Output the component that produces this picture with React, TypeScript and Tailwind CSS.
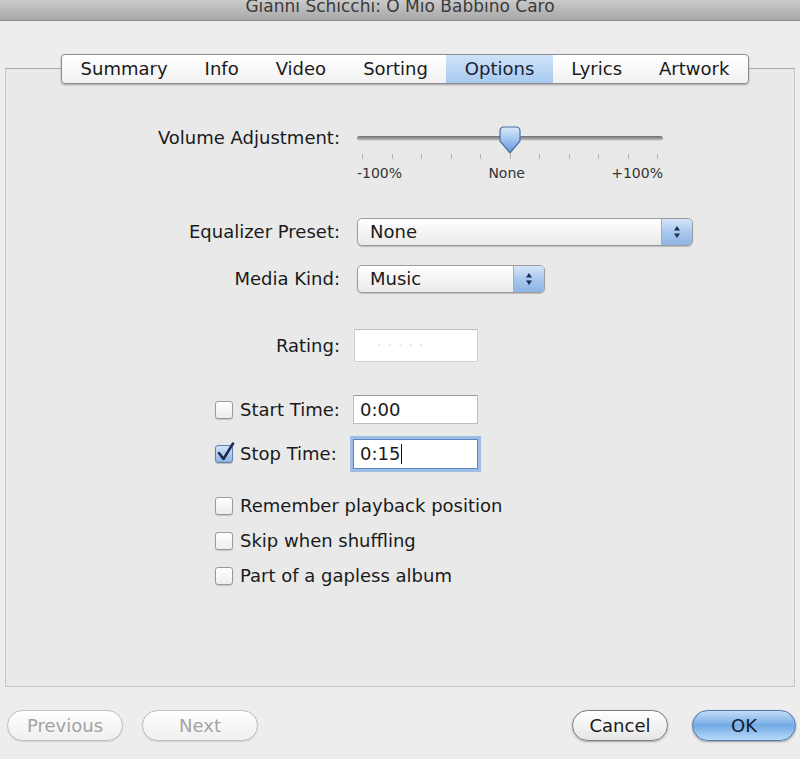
import React from "react";

function Checkbox({ checked = false }: { checked?: boolean }) {
  if (checked) {
    return (
      <div className="relative w-[18px] h-[18px] shrink-0 rounded-[3px] border border-[#5f80ad] bg-gradient-to-b from-[#d3e4f8] to-[#8fb4e2] shadow-[0_1px_1px_rgba(0,0,0,0.2)]">
        <svg className="absolute -top-[4px] left-[1px]" width="19" height="21" viewBox="0 0 19 21">
          <path d="M2 11 L6.5 17 L16 1.5" fill="none" stroke="#1b2c57" strokeWidth="2.6" strokeLinecap="round" strokeLinejoin="round" />
        </svg>
      </div>
    );
  }
  return (
    <div className="w-[18px] h-[18px] shrink-0 rounded-[3px] border border-[#9a9a9a] bg-gradient-to-b from-white to-[#ededed] shadow-[0_1px_1px_rgba(0,0,0,0.15)]" />
  );
}

function Select({ value, width }: { value: string; width: string }) {
  return (
    <div className={`relative h-[28px] ${width} rounded-[5px] border border-[#9c9c9c] bg-gradient-to-b from-white to-[#eaeaea] shadow-[0_1px_1px_rgba(0,0,0,0.2)] flex items-center`}>
      <span className="pl-[12px] text-[18px] leading-none text-[#1a1a1a]">{value}</span>
      <div className="absolute right-0 top-0 bottom-0 w-[31px] rounded-r-[4px] border-l border-[#94b0d6] bg-gradient-to-b from-[#d6e6f9] via-[#a9c8ee] to-[#8eb4e4] flex items-center justify-center">
        <svg width="10" height="16" viewBox="0 0 10 16">
          <path d="M5 2 L8 6.5 H2 Z" fill="#1e2d50" />
          <path d="M5 14 L8 9.5 H2 Z" fill="#1e2d50" />
        </svg>
      </div>
    </div>
  );
}

function Button({ label, width, kind }: { label: string; width: string; kind: "disabled" | "normal" | "default" }) {
  const base = `h-[31px] ${width} rounded-full flex items-center justify-center text-[18px] leading-none`;
  if (kind === "disabled") {
    return (
      <div className={`${base} border border-[#bdbdbd] bg-gradient-to-b from-white to-[#efefef] text-[#a3a3a3] shadow-[0_1px_1px_rgba(0,0,0,0.12)]`}>
        {label}
      </div>
    );
  }
  if (kind === "default") {
    return (
      <div className={`${base} border border-[#4e78ad] bg-gradient-to-b from-[#c3ddf7] via-[#74aae5] to-[#b9dbfa] text-[#121a2a] shadow-[0_1px_2px_rgba(0,0,0,0.35)]`}>
        {label}
      </div>
    );
  }
  return (
    <div className={`${base} border border-[#7c7c7c] bg-gradient-to-b from-white to-[#e6e6e6] text-[#1a1a1a] shadow-[0_1px_2px_rgba(0,0,0,0.3)]`}>
      {label}
    </div>
  );
}

export default function App() {
  const tabs = ["Summary", "Info", "Video", "Sorting", "Options", "Lyrics", "Artwork"];
  const ticks = Array.from({ length: 11 }, (_, i) => i);
  return (
    <div className="w-[800px] h-[759px] overflow-hidden bg-[#ededed] font-['DejaVu_Sans',sans-serif] text-[#1a1a1a] flex flex-col">
      {/* Title bar */}
      <div className="h-[21px] shrink-0 overflow-hidden bg-gradient-to-b from-[#cacaca] to-[#a8a8a8] border-b border-[#8c8c8c] text-center">
        <div className="-mt-[6px] text-[17px] leading-[24px] text-[#3a3a3a]">Gianni Schicchi: O Mio Babbino Caro</div>
      </div>

      {/* Group box */}
      <div className="mx-[5px] mt-[47px] h-[619px] shrink-0 border border-[#c6c6c6] border-t-[#a9a9a9] bg-[#e9e9e9] flex flex-col">
        {/* Tabs */}
        <div className="-mt-[15px] flex justify-center pl-[10px]">
          <div className="flex h-[30px] rounded-[4px] border border-[#8e8e8e] bg-gradient-to-b from-white to-[#f1f1f1] shadow-[0_1px_2px_rgba(0,0,0,0.3)] overflow-hidden">
            {tabs.map((t) => (
              <div
                key={t}
                className={
                  t === "Options"
                    ? "px-[18.5px] flex items-center text-[18px] leading-none bg-gradient-to-b from-[#cfe3f9] to-[#a7caf1] text-[#1a2233]"
                    : "px-[18.5px] flex items-center text-[18px] leading-none text-[#1a1a1a]"
                }
              >
                {t}
              </div>
            ))}
          </div>
        </div>

        {/* Volume Adjustment */}
        <div className="mt-[40px] flex items-start">
          <div className="w-[334px] mt-[3px] text-right text-[18px] leading-[22px]">Volume Adjustment:</div>
          <div className="ml-[17px] w-[306px] h-[58px] relative">
            <div className="mt-[12px] h-[5px] rounded-full bg-gradient-to-b from-[#6f6f6f] to-[#b9b9b9] border-b border-[#d8d8d8]" />
            <div className="mt-[13px] h-[5px] flex justify-between px-[5px]">
              {ticks.map((i) => (
                <div key={i} className="w-px h-[5px] bg-[#b3b3b3]" />
              ))}
            </div>
            <div className="mt-[6px] flex justify-between text-[14px] leading-[17px] text-[#333]">
              <span>-100%</span>
              <span>None</span>
              <span>+100%</span>
            </div>
            <svg className="absolute left-1/2 -translate-x-1/2 top-[2px]" width="22" height="28" viewBox="0 0 22 28">
              <defs>
                <linearGradient id="thumb" x1="0" y1="0" x2="0" y2="1">
                  <stop offset="0" stopColor="#dbe9f9" />
                  <stop offset="0.5" stopColor="#9fc2ee" />
                  <stop offset="1" stopColor="#5f95d8" />
                </linearGradient>
              </defs>
              <path d="M5 1 H17 Q21 1 21 5 V15 L11 27 L1 15 V5 Q1 1 5 1 Z" fill="url(#thumb)" stroke="#4f6f9c" strokeWidth="1.2" />
            </svg>
          </div>
        </div>

        {/* Equalizer Preset */}
        <div className="mt-[36px] flex items-center h-[28px]">
          <div className="w-[334px] text-right text-[18px] leading-none">Equalizer Preset:</div>
          <div className="ml-[17px]">
            <Select value="None" width="w-[336px]" />
          </div>
        </div>

        {/* Media Kind */}
        <div className="mt-[19px] flex items-center h-[28px]">
          <div className="w-[334px] text-right text-[18px] leading-none">Media Kind:</div>
          <div className="ml-[17px]">
            <Select value="Music" width="w-[188px]" />
          </div>
        </div>

        {/* Rating */}
        <div className="mt-[36px] flex items-center h-[33px]">
          <div className="w-[334px] text-right text-[18px] leading-none">Rating:</div>
          <div className="ml-[14px] w-[124px] h-[33px] bg-white border border-[#d2d2d2] border-t-[#bdbdbd] flex items-center pl-[22px] text-[14px] tracking-[6px] text-[#e0e0e0]">
            ·····
          </div>
        </div>

        {/* Start Time */}
        <div className="mt-[33px] flex items-center h-[29px] pl-[209px]">
          <Checkbox />
          <span className="ml-[7px] w-[113px] text-[18px] leading-none">Start Time:</span>
          <div className="w-[125px] h-[29px] bg-white border border-[#bcbcbc] border-t-[#9a9a9a] flex items-center pl-[6px] text-[18px] leading-none">
            0:00
          </div>
        </div>

        {/* Stop Time */}
        <div className="mt-[15px] flex items-center h-[30px] pl-[209px]">
          <Checkbox checked />
          <span className="ml-[7px] w-[113px] text-[18px] leading-none">Stop Time:</span>
          <div className="w-[125px] h-[30px] bg-white border border-[#5c86bf] shadow-[0_0_0_3px_#9dbde6] flex items-center pl-[6px] text-[18px] leading-none">
            0:15
            <span className="ml-[1px] w-px h-[20px] bg-[#111]" />
          </div>
        </div>

        {/* Checkbox options */}
        <div className="mt-[26px] flex items-center h-[22px] pl-[209px]">
          <Checkbox />
          <span className="ml-[7px] text-[18px] leading-none">Remember playback position</span>
        </div>
        <div className="mt-[13px] flex items-center h-[22px] pl-[209px]">
          <Checkbox />
          <span className="ml-[7px] text-[18px] leading-none">Skip when shuffling</span>
        </div>
        <div className="mt-[13px] flex items-center h-[22px] pl-[209px]">
          <Checkbox />
          <span className="ml-[7px] text-[18px] leading-none">Part of a gapless album</span>
        </div>
      </div>

      {/* Bottom buttons */}
      <div className="mt-[23px] flex items-center justify-between pl-[7px] pr-[4px]">
        <div className="flex gap-[19px]">
          <Button label="Previous" width="w-[116px]" kind="disabled" />
          <Button label="Next" width="w-[116px]" kind="disabled" />
        </div>
        <div className="flex gap-[24px]">
          <Button label="Cancel" width="w-[96px]" kind="normal" />
          <Button label="OK" width="w-[104px]" kind="default" />
        </div>
      </div>
    </div>
  );
}
